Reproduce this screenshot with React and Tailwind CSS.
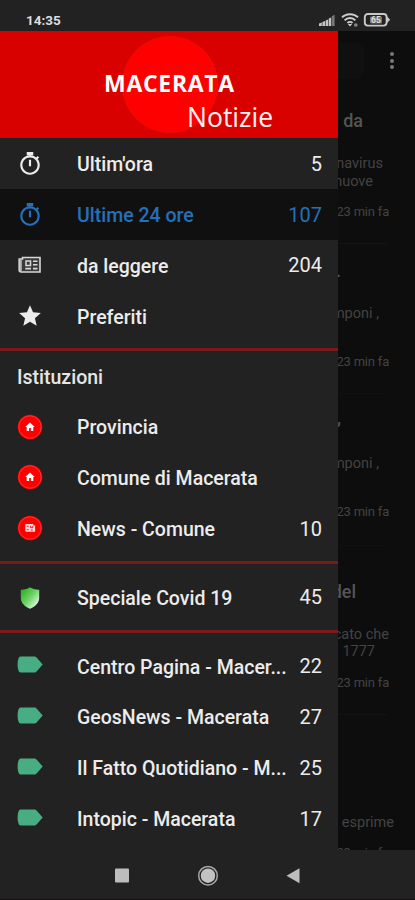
import { MdStar } from 'react-icons/md'

function TimerIcon() {
  return (
    <svg viewBox="0 0 24 24" className="w-[26px] h-[26px] mt-[2px]" fill="currentColor">
      <path d="M15 1H9v3h6V1zm-4 13h2V8h-2v6zm8.03-6.61l1.42-1.42c-.43-.51-.9-.99-1.41-1.41l-1.42 1.42C16.07 4.74 14.12 4 12 4c-4.97 0-9 4.03-9 9s4.02 9 9 9 9-4.03 9-9c0-2.12-.74-4.07-1.97-5.61zM12 20c-3.87 0-7-3.13-7-7s3.13-7 7-7 7 3.13 7 7-3.13 7-7 7z" />
    </svg>
  )
}

function NewspaperIcon() {
  return (
    <svg viewBox="0 0 24 18" className="w-[24px] h-[18px]" fill="none" stroke="#d8d8d8">
      <path d="M4.500 1.500h17.500v14.500H3.200c-1.200 0-2-.8-2-2V3h3.300z" strokeWidth="1.600" fill="#3a3a3a" />
      <path d="M2.800 3v12" stroke="#b5b5b5" strokeWidth="2" />
      <rect x="8" y="5" width="4.500" height="4.500" strokeWidth="1.500" />
      <path d="M15 5.200h4.500M15 8.800h4.500M7.300 12.600h5.700M15 12.600h4.500" strokeWidth="1.600" />
    </svg>
  )
}

function HomeBadge() {
  return (
    <svg viewBox="0 0 26 26" className="w-[26px] h-[26px]">
      <circle cx="13" cy="13" r="12.3" fill="#f00000" />
      <circle cx="13" cy="13" r="11.2" fill="#ff0000" stroke="#ff4a48" strokeWidth="0.7" />
      <path d="M13 8.6l-4.7 4.3h1.4v4h2.4v-2.8h1.8v2.8h2.4v-4h1.4z" fill="#fff" />
    </svg>
  )
}

function NewsBadge() {
  return (
    <svg viewBox="0 0 26 26" className="w-[26px] h-[26px]">
      <circle cx="13" cy="13" r="12.3" fill="#f00000" />
      <circle cx="13" cy="13" r="11.2" fill="#ff0000" stroke="#ff4a48" strokeWidth="0.7" />
      <path d="M8.3 9h8v1.5h1.8v6.3H9.6c-.8 0-1.3-.5-1.3-1.3z" fill="#ffdada" />
      <path d="M9.6 11.2h2.2M9.6 14.7h2.2M13.6 10.8v1.9h2.2v-1.9M13.6 15h2.2" stroke="#ff0000" strokeWidth="0.9" fill="none" />
    </svg>
  )
}

function ShieldIcon() {
  return (
    <svg viewBox="0 0 20 22" className="w-[20px] h-[22px] mt-[3px]">
      <defs>
        <linearGradient id="shield" x1="0" y1="0" x2="1" y2="1">
          <stop offset="0.15" stopColor="#35b52c" />
          <stop offset="0.5" stopColor="#6fd468" />
          <stop offset="0.85" stopColor="#dcf5d9" />
        </linearGradient>
      </defs>
      <path d="M10 0.3C7.8 2 4 3 0.8 2.8V11c0 5 4.5 9 9.2 10.8C14.7 20 19.2 16 19.2 11V2.8C16 3 12.2 2 10 0.3z" fill="url(#shield)" />
    </svg>
  )
}

function TagIcon() {
  return (
    <svg viewBox="0 0 26 17" className="w-[26px] h-[17px] mb-[2px]">
      <path d="M3.5 0.5h13.500c1.2 0 2 .4 2.8 1.3l5.900 6.700-5.900 6.700c-.8.9-1.6 1.3-2.8 1.3H3.500C1.800 16.500.600 13 .600 8.500S1.800.500 3.500.500z" fill="#48ad83" />
    </svg>
  )
}

const mainItems = [
  { label: "Ultim'ora", count: 5, icon: <TimerIcon /> },
  { label: 'Ultime 24 ore', count: 107, icon: <TimerIcon />, active: true },
  { label: 'da leggere', count: 204, icon: <NewspaperIcon /> },
  { label: 'Preferiti', icon: <MdStar className="w-[26px] h-[26px] mt-px" /> },
]

const institutions = [
  { label: 'Provincia', icon: <HomeBadge /> },
  { label: 'Comune di Macerata', icon: <HomeBadge /> },
  { label: 'News - Comune', count: 10, icon: <NewsBadge /> },
]

const sources = [
  { label: 'Centro Pagina - Macer...', count: 22, icon: <TagIcon /> },
  { label: 'GeosNews - Macerata', count: 27, icon: <TagIcon /> },
  { label: 'Il Fatto Quotidiano - M...', count: 25, icon: <TagIcon /> },
  { label: 'Intopic - Macerata', count: 17, icon: <TagIcon /> },
]

function Item({ label, count, icon, active }) {
  return (
    <div className={`flex items-center h-[50.8px] shrink-0 pl-4 pr-4 text-[19.5px] ${active ? 'bg-[#101010] text-[#2570ba]' : 'text-[#ececec]'}`}>
      <div className="w-7 shrink-0 flex justify-center">{icon}</div>
      <div className="ml-[33px] pt-[3px] font-medium whitespace-nowrap">{label}</div>
      <div className="flex-1 pt-px text-right text-[20px]">{count}</div>
    </div>
  )
}

function Divider() {
  return <div className="h-[3px] shrink-0 bg-[#7c191b]" />
}

function Drawer() {
  return (
    <div className="w-[338px] shrink-0 h-full bg-[#222222] flex flex-col overflow-hidden">
      <div className="relative h-[107px] shrink-0 bg-[#d90000]">
        <div className="absolute left-[122px] top-[5px] w-[96px] h-[97px] rounded-full bg-[#ff0000] border border-[#e81000]" />
        <div className="absolute left-[104px] top-[37px] leading-[30px] text-[23px] tracking-[0.7px] font-bold text-white font-['Open_Sans',sans-serif]">MACERATA</div>
        <div className="absolute left-[187px] top-[68px] leading-[36px] text-[26.5px] text-[#fff0f0] font-['Open_Sans',sans-serif]">Notizie</div>
      </div>

      {mainItems.map((item) => (
        <Item key={item.label} {...item} />
      ))}

      <div className="h-[7px] shrink-0" />
      <Divider />
      <div className="h-[50px] shrink-0 pl-[17px] pt-[3px] flex items-center text-[19.5px] font-medium text-[#e6e6e6]">Istituzioni</div>
      {institutions.map((item) => (
        <Item key={item.label} {...item} />
      ))}

      <div className="h-[7px] shrink-0" />
      <Divider />
      <div className="py-[8px] shrink-0">
        <Item label="Speciale Covid 19" count={45} icon={<ShieldIcon />} />
      </div>
      <Divider />
      <div className="h-[7px] shrink-0" />

      {sources.map((item) => (
        <Item key={item.label} {...item} />
      ))}
    </div>
  )
}

function Line({ className, children }) {
  return <div className={`flex justify-end shrink-0 whitespace-pre leading-[18px] h-[18px] ${className}`}>{children}</div>
}

// Article list, dimmed while the drawer is open
function DimmedList() {
  return (
    <div className="flex-1 min-w-0 h-full bg-[#0d0d0d] flex flex-col overflow-hidden text-[15px] text-[#434343]">
      <div className="h-[60px] shrink-0 flex justify-between pt-3 pr-[21px]">
        <div className="w-[26px] h-[36px] rounded-r-lg bg-[#101010]" />
        <div className="flex flex-col items-center gap-[2.5px] pt-[9px]">
          <div className="w-1 h-1 rounded-full bg-[#777777]" />
          <div className="w-1 h-1 rounded-full bg-[#777777]" />
          <div className="w-1 h-1 rounded-full bg-[#777777]" />
        </div>
      </div>

      <Line className="mt-[21px] pr-[52px] text-[18px] font-medium text-[#555555]">da</Line>
      <Line className="mt-[25px] pr-[32px] text-[14.5px]">navirus</Line>
      <Line className="pr-[42px] text-[14.5px]">nuove</Line>
      <Line className="mt-[12px] pr-[26px] text-[13px] tracking-[-0.2px]">23 min fa</Line>
      <div className="mt-[22px] mr-7 h-px shrink-0 bg-[#141414]" />

      <Line className="mt-[18px] pr-[74px] text-[18px] font-medium text-[#555555]">.</Line>
      <Line className="mt-[25px] pr-[36px] text-[14.5px]">mponi ,</Line>
      <Line className="mt-[30px] pr-[26px] text-[13px] tracking-[-0.2px]">23 min fa</Line>
      <div className="mt-[22px] mr-7 h-px shrink-0 bg-[#111111]" />

      <Line className="mt-[15px] pr-[74px] text-[18px] font-medium text-[#555555]">,</Line>
      <Line className="mt-[28px] pr-[36px] text-[14.5px]">mponi ,</Line>
      <Line className="mt-[30px] pr-[26px] text-[13px] tracking-[-0.2px]">23 min fa</Line>
      <div className="mt-[24px] mr-7 h-px shrink-0 bg-[#111111]" />

      <Line className="mt-[37px] pr-[59px] text-[18px] font-medium text-[#555555]">del</Line>
      <Line className="mt-[25px] pr-[26px] text-[14.5px]">cato che</Line>
      <Line className="-mt-px pr-[40px] text-[14.5px]">1777</Line>
      <Line className="mt-[13px] pr-[26px] text-[13px] tracking-[-0.2px]">23 min fa</Line>
      <div className="mt-[22px] mr-7 h-px shrink-0 bg-[#131313]" />

      <Line className="mt-[99px] pr-[21px] text-[14.5px]">esprime</Line>
      <Line className="mt-[12px] pr-[26px] text-[13px] tracking-[-0.2px]">23 min fa</Line>
    </div>
  )
}

function StatusBar() {
  return (
    <div className="h-[31px] shrink-0 flex items-center pl-[26px] pr-[24px] pt-[8px] text-[#dddddd]">
      <div className="text-[13.5px] leading-4 font-bold">14:35</div>
      <div className="flex-1" />
      <svg viewBox="0 0 72 16" className="w-[72px] h-4">
        <g fill="#c4c4c4">
          <path d="M0 14v-2.500l2.800-1v3.500z" />
          <path d="M3.400 14v-4l2.600-1v5z" />
          <path d="M6.600 14V8.400l2.500-1V14z" />
          <path d="M9.700 14V6.400l2.500-1V14z" />
          <path d="M12.800 14V4.200l2.800-1.500V14z" fill="#777777" />
        </g>
        <g fill="none" stroke="#cccccc" strokeWidth="1.900">
          <path d="M23 5.400c4-4.300 12-4.300 16 0" />
          <path d="M25.600 8.300c2.900-3.100 7.900-3.100 10.800 0" />
          <path d="M28.500 11c1.400-1.400 3.600-1.400 5 0" />
        </g>
        <path d="M31 14.600l-2.200-2.600h4.400z" fill="#cccccc" />
        <circle cx="36.800" cy="13" r="1.800" fill="#888888" />
        <rect x="45.800" y="2" width="21.800" height="11.600" rx="3" fill="none" stroke="#c8c8c8" strokeWidth="1.900" />
        <path d="M68 4.600l3.200 3.200-3.200 3.200z" fill="#c8c8c8" />
        <rect x="51" y="4.400" width="12" height="7" rx="1" fill="#777777" />
        <text x="57" y="10.900" textAnchor="middle" fontSize="8.500" fontWeight="700" fill="#dddddd">65</text>
      </svg>
    </div>
  )
}

function NavBar() {
  return (
    <div className="h-[50px] shrink-0 bg-[#222222] border-b border-[#171017]">
      <svg viewBox="0 0 415 49" className="w-[415px] h-[49px]">
        <rect x="115" y="18.500" width="14" height="14" rx="1" fill="#bdbdbd" />
        <circle cx="208" cy="25.700" r="9.300" fill="none" stroke="#a8a8a8" strokeWidth="1.500" />
        <circle cx="208" cy="25.700" r="7.200" fill="#c2c2c2" />
        <path d="M286.500 25.700l13-7.500v15z" fill="#bdbdbd" />
      </svg>
    </div>
  )
}

export default function App() {
  return (
    <div className="w-[415px] h-[900px] bg-[#222222] flex flex-col overflow-hidden font-[Roboto,sans-serif]">
      <StatusBar />
      <div className="flex h-[819px] shrink-0">
        <Drawer />
        <DimmedList />
      </div>
      <NavBar />
    </div>
  )
}
